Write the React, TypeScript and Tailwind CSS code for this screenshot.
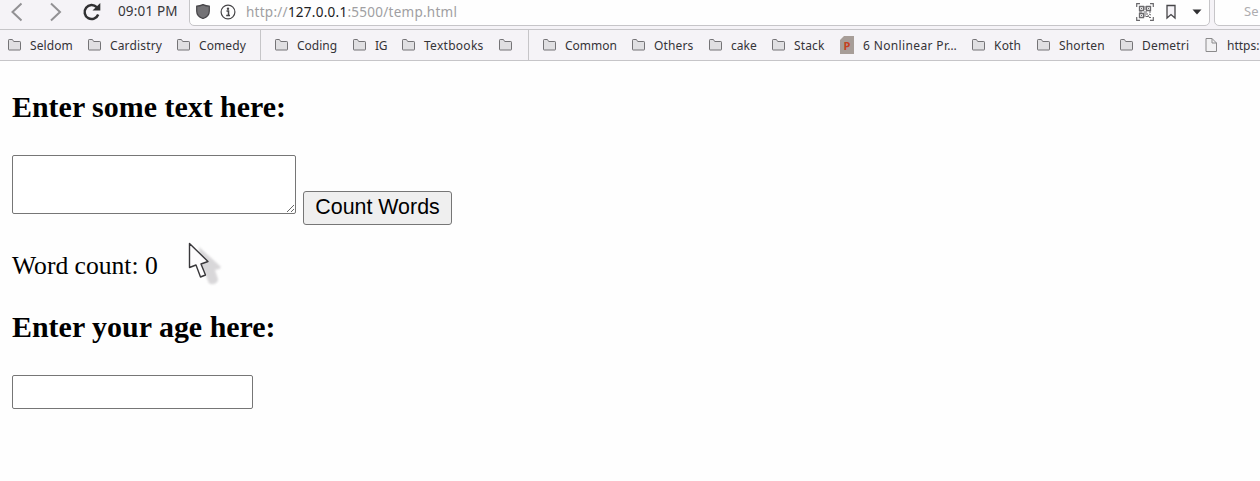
import { useState } from "react";

type Kind = "folder" | "slides" | "file";
type Bookmark = { label: string; kind: Kind; box: string; text?: string };

const groups: Bookmark[][] = [
  [
    { label: "Seldom", kind: "folder", box: "w-[80px]", text: "tracking-[0.1px]" },
    { label: "Cardistry", kind: "folder", box: "w-[89px]", text: "tracking-[0.15px]" },
    { label: "Comedy", kind: "folder", box: "w-[83px]", text: "tracking-[0.1px]" },
  ],
  [
    { label: "Coding", kind: "folder", box: "w-[78px]" },
    { label: "IG", kind: "folder", box: "w-[49px]", text: "tracking-[-0.4px]" },
    { label: "Textbooks", kind: "folder", box: "w-[97px]", text: "tracking-[0.28px]" },
    { label: "", kind: "folder", box: "w-[29px]" },
  ],
  [
    { label: "Common", kind: "folder", box: "w-[89px]" },
    { label: "Others", kind: "folder", box: "w-[77px]", text: "tracking-[0.15px]" },
    { label: "cake", kind: "folder", box: "w-[63px]" },
    { label: "Stack", kind: "folder", box: "w-[68px]", text: "tracking-[0.15px]" },
    { label: "6 Nonlinear Pr…", kind: "slides", box: "w-[132px]", text: "tracking-[0.36px]" },
    { label: "Koth", kind: "folder", box: "w-[65px]", text: "tracking-[0.2px]" },
    { label: "Shorten", kind: "folder", box: "w-[83px]", text: "tracking-[0.15px]" },
    { label: "Demetri", kind: "folder", box: "w-[85px]", text: "tracking-[0.2px]" },
    { label: "https:", kind: "file", box: "w-[60px]" },
  ],
];

function BookmarkIcon({ kind }: { kind: Kind }) {
  if (kind === "slides") {
    return (
      <span className="mr-[9px] flex h-[18px] w-[14px] items-center justify-center bg-[#a79d98] pt-[2px] font-['Open_Sans',sans-serif] text-[11px] font-bold text-[#c5401d] [clip-path:polygon(4px_0,100%_0,100%_100%,0_100%,0_4px)]">
        P
      </span>
    );
  }
  if (kind === "file") {
    return (
      <svg className="mr-[9px] h-[16px] w-[13px]" viewBox="0 0 13 16" fill="#f2f1f3" stroke="#8b8a8c">
        <path d="M1 1.500h6l4.500 4.500v8.500H1z" />
        <path d="M7 1.500V6h4.500" fill="none" />
      </svg>
    );
  }
  return (
    <svg className="mr-[9px] h-[12px] w-[13px]" viewBox="0 0 13 12" fill="#e0dfe2" stroke="#747376">
      <path d="M.5 10.500V1.200q0-.7.7-.7h3.200l1.300 2h6.100q.7 0 .7.700v7.300q0 .5-.5.500H1q-.5 0-.5-.5z" />
    </svg>
  );
}

function QrIcon() {
  return (
    <svg className="h-[18px] w-[18px]" viewBox="0 0 18 18" fill="none" stroke="#6a696c">
      <path d="M.7 4V.7H4M14 .7h3.300V4M17.300 14v3.300H14M4 17.300H.7V14" strokeWidth="1.200" />
      <path d="M3.500 3.500h4v4h-4zM10.500 3.500h4v4h-4zM3.500 10.500h4v4h-4z" strokeWidth="1.300" />
      <path d="M5 5.500h1M12 5.500h1M5 12.500h1M9 3v4M3 9h3M8 9h3M13 9h2M9 10v4M10 11h2M13 11l2 1M10 13.500h2M13 14.500h2M12 12l1 2" />
    </svg>
  );
}

function Toolbar() {
  return (
    <div className="flex h-[30px] items-start overflow-hidden border-b border-[#c6c5c8] bg-[#f5f3f7] font-['Noto_Sans',sans-serif]">
      <svg className="h-[29px] w-[110px] shrink-0" viewBox="0 0 110 29" fill="none">
        <path d="M21.500 3.500L12.500 12l9 8.500M51 3.500l9 8.500-9 8.500" stroke="#929194" strokeWidth="2" />
        <path d="M96.700 7.200A7 7 0 1 0 98.200 14.500" stroke="#303032" strokeWidth="2.500" />
        <path d="M100.300 3v7.500h-7.800z" fill="#303032" />
      </svg>
      <div className="mt-[1px] ml-[8px] w-[71px] shrink-0 whitespace-nowrap text-[13.500px] leading-5 tracking-[0.15px] text-[#38373a]">
        09:01 PM
      </div>
      <div className="-mt-[5px] flex h-[31px] w-[1021px] shrink-0 items-start rounded-[5px] border border-[#c6c5c8] bg-[#fefefe] pt-[4px]">
        <svg className="mt-[4px] ml-[6px] h-[15px] w-[14px]" viewBox="0 0 14 15">
          <path d="M7 .6Q10 2 13.300 2.200V7c0 4-3 6.500-6.300 7.500C3.700 13.500.7 11 .7 7V2.200Q4 2 7 .6z" fill="#737275" stroke="#464548" strokeWidth="1.200" />
        </svg>
        <svg className="mt-[4px] ml-[9.500px] h-[16px] w-[16px]" viewBox="0 0 16 16">
          <circle cx="8" cy="8" r="6.900" fill="none" stroke="#464548" strokeWidth="1.200" />
          <circle cx="8" cy="4.700" r="1.200" fill="#464548" />
          <path d="M6.500 7h2v4.500M6.200 11.500h3.800" fill="none" stroke="#464548" strokeWidth="1.500" />
        </svg>
        <div className="mt-[2px] ml-[10.500px] whitespace-nowrap text-[13.500px] leading-5 tracking-[0.26px] text-[#a09fa2]">
          http://<span className="text-[#202022]">127.0.0.1</span>:5500/temp.html
        </div>
        <div className="mt-[3px] mr-[7px] ml-auto flex items-center">
          <QrIcon />
          <svg className="ml-[12px] h-[16px] w-[10px]" viewBox="0 0 10 16" fill="#f5f3f7" stroke="#464548" strokeWidth="1.300">
            <path d="M1 1.500h8v12.500L5 10.500 1 14z" />
          </svg>
          <svg className="ml-[16px] h-[6px] w-[10px]" viewBox="0 0 10 6" fill="#303032">
            <path d="M.5.500h9L5 5.500z" />
          </svg>
        </div>
      </div>
      <div className="-mt-[5px] ml-[4px] h-[31px] w-[80px] shrink-0 rounded-[5px] border border-[#c6c5c8] bg-[#fefefe] pt-[5px] pl-[29px] text-[13px] leading-5 text-[#aeadb0]">
        Se
      </div>
    </div>
  );
}

function BookmarksBar() {
  return (
    <div className="flex h-[31px] overflow-hidden border-b border-[#c6c5c8] bg-[#f5f3f7] font-['Noto_Sans',sans-serif] text-[12px] text-[#353437]">
      {groups.map((group, index) => (
        <div
          key={index}
          className={index === 0 ? "flex shrink-0 pl-[8px]" : "flex shrink-0 border-l border-[#c6c5c8] pl-[14px]"}
        >
          {group.map((item) => (
            <div key={item.label} className={`flex shrink-0 items-center whitespace-nowrap ${item.box}`}>
              <BookmarkIcon kind={item.kind} />
              <span className={`pt-[2px] ${item.text ?? ""}`}>{item.label}</span>
            </div>
          ))}
        </div>
      ))}
    </div>
  );
}

function Pointer() {
  return (
    <svg className="absolute top-[241px] left-[187px] h-[48px] w-[38px]" viewBox="0 0 38 48">
      <path
        d="M12 6L33 25q2 2-1 3l-4 1 3 9q0 4-4 5-5 1-6-3l-4-10-4 3z"
        fill="#c9c7ca"
        opacity="0.7"
        className="blur-[1px]"
      />
      <path
        d="M2.500 2.500v24l6.500-2.500 4.500 12 5-2-4.500-11 7-2.500z"
        fill="#fdfcfd"
        stroke="#39383b"
        strokeWidth="1.400"
        strokeLinejoin="round"
      />
    </svg>
  );
}

export default function App() {
  const [text, setText] = useState("");
  const [count, setCount] = useState(0);
  const [age, setAge] = useState("");

  return (
    <div className="relative h-[481px] overflow-hidden bg-[#fefefe] text-black">
      <Toolbar />
      <BookmarksBar />
      <main className="flex flex-col items-start pl-[12px] font-['Liberation_Serif',serif]">
        <h3 className="mt-[29px] text-[29.950px] leading-[34px] font-bold">Enter some text here:</h3>
        <div className="mt-[31px] flex items-end">
          <textarea
            value={text}
            onChange={(event) => setText(event.target.value)}
            className="mb-[11px] h-[59px] w-[284px] resize rounded-[2px] border border-[#767676] bg-white"
          />
          <button
            onClick={() => setCount(text.split(/\s+/).filter(Boolean).length)}
            className="ml-[7px] h-[34px] w-[149px] rounded-[3px] border border-[#767676] bg-[#efefef] pb-[2px] font-['Liberation_Sans',sans-serif] text-[21.400px] leading-[30px]"
          >
            Count Words
          </button>
        </div>
        <p className="mt-[26px] text-[25.600px] leading-[29px]">Word count: {count}</p>
        <h3 className="mt-[30px] text-[29.950px] leading-[34px] font-bold">Enter your age here:</h3>
        <input
          value={age}
          onChange={(event) => setAge(event.target.value)}
          className="mt-[31px] h-[34px] w-[241px] rounded-[2px] border border-[#767676] bg-white"
        />
      </main>
      <Pointer />
    </div>
  );
}
